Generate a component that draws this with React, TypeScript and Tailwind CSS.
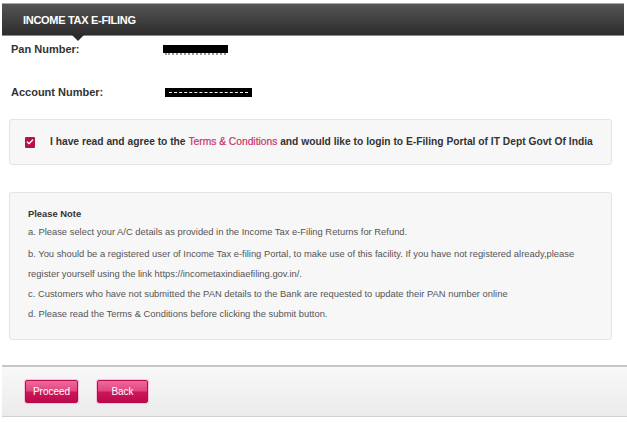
import { Check } from 'lucide-react';

const notes = [
  { text: 'a. Please select your A/C details as provided in the Income Tax e-Filing Returns for Refund.', gap: 'mt-[2px]' },
  { text: 'b. You should be a registered user of Income Tax e-filing Portal, to make use of this facility. If you have not registered already,please register yourself using the link https://incometaxindiaefiling.gov.in/.', gap: 'mt-[2px]' },
  { text: 'c. Customers who have not submitted the PAN details to the Bank are requested to update their PAN number online', gap: 'mt-0' },
  { text: 'd. Please read the Terms & Conditions before clicking the submit button.', gap: 'mt-0' },
];

function PinkButton({ label, width }: { label: string; width: string }) {
  return (
    <button
      type="button"
      className={[
        'h-[23px] rounded-[2px] border border-[#b80a4c] text-white text-[10px]',
        'bg-[linear-gradient(to_bottom,#ee6a9c_0%,#e0457f_48%,#cc175a_52%,#bd0a4d_100%)]',
        'shadow-[0_0_0_1px_#f3c5d6]',
        width,
      ].join(' ')}
    >
      {label}
    </button>
  );
}

export default function App() {
  return (
    <div className="w-[627px] h-[422px] bg-white overflow-hidden font-['Liberation_Sans',Arial,sans-serif] text-[#333]">
      {/* header bar */}
      <div className="relative mt-[3px] ml-[2px] mr-[3px] h-[32px] border-t border-[#a8a8a8] bg-[linear-gradient(to_bottom,#555555,#2c2c2c)] shadow-[0_1px_0_#8a8a8a]">
        <div className="pl-[21px] pt-[8px] text-[11px] font-bold text-white tracking-[-0.3px]">
          INCOME TAX E-FILING
        </div>
        <span className="absolute left-[70px] top-full w-0 h-0 border-x-[6px] border-t-[6px] border-x-transparent border-t-[#2c2c2c]" />
      </div>

      {/* account fields */}
      <div className="flex items-center h-[16px] mt-[6px] pl-[11px] text-[11px] font-bold">
        <span className="w-[152px]">Pan Number:</span>
        <span className="relative w-[65px] h-[8px] bg-black">
          <span className="absolute left-[2px] right-[2px] top-[8px] border-t-[2px] border-dotted border-[#9a9a9a]" />
        </span>
      </div>
      <div className="flex items-center h-[16px] mt-[27px] pl-[11px] text-[11px] font-bold">
        <span className="w-[154px]">Account Number:</span>
        <span className="flex items-center px-[4px] w-[87px] h-[9px] bg-black">
          <span className="flex-1 border-t border-dashed border-white" />
        </span>
      </div>

      {/* agree panel */}
      <div className="flex items-center gap-[15px] mx-[9px] mt-[19px] w-[603px] h-[46px] pl-[15px] bg-[#f7f7f7] border border-[#e4e4e4] rounded-[3px] text-[10.25px] font-bold">
        <span className="flex items-center justify-center w-[10px] h-[11px] bg-[#b3124d] rounded-[1px]">
          <Check size={8} strokeWidth={4} className="text-white" />
        </span>
        <span>
          I have read and agree to the <span className="text-[#c8336a] font-normal [-webkit-text-stroke:0.2px_#c8336a]">Terms &amp; Conditions</span> and would like to login to E-Filing Portal of IT Dept Govt Of India
        </span>
      </div>

      {/* note panel */}
      <div className="mx-[9px] mt-[27px] w-[603px] h-[148px] pl-[18px] pr-[30px] pt-[15px] bg-[#f7f7f7] border border-[#e4e4e4] rounded-[3px] text-[9.4px]">
        <div className="font-bold text-[#333] leading-[12px]">Please Note</div>
        {notes.map((n) => (
          <p key={n.text} className={`leading-[20px] text-[#555] ${n.gap}`}>
            {n.text}
          </p>
        ))}
      </div>

      {/* footer actions */}
      <div className="flex items-center gap-[19px] mt-[25px] ml-[2px] h-[52px] pl-[23px] border-t-[2px] border-b border-t-[#c6c6c6] border-b-[#d2d2d2] bg-[linear-gradient(to_bottom,#f8f8f8,#ebebeb)]">
        <PinkButton label="Proceed" width="w-[53px]" />
        <PinkButton label="Back" width="w-[51px]" />
      </div>
    </div>
  );
}
